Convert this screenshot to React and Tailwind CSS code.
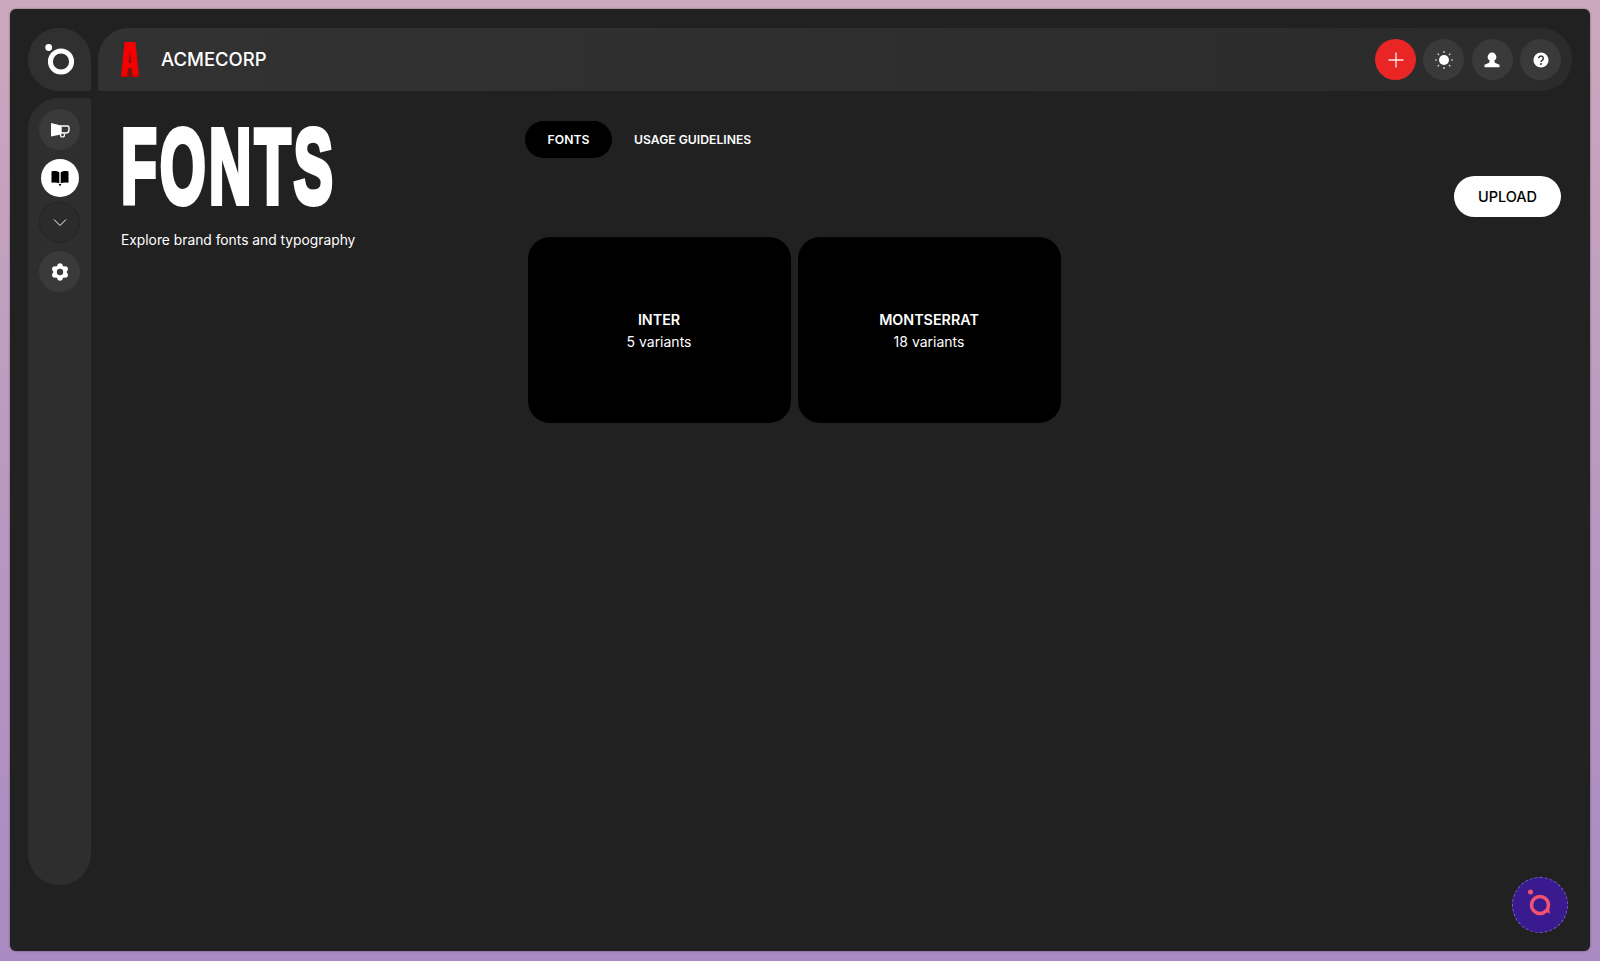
import React from "react";

const font = "font-['Inter','Noto_Sans','Liberation_Sans',sans-serif]";

function Round({ className = "", children }) {
  return <div className={`flex items-center justify-center rounded-full ${className}`}>{children}</div>;
}

function Logo() {
  return (
    <svg width="40" height="40" viewBox="0 0 40 40" fill="none">
      <circle cx="8.7" cy="7.5" r="3.4" fill="#fff" />
      <circle cx="21" cy="21.5" r="10.6" stroke="#fff" strokeWidth="5" />
    </svg>
  );
}

function BrandA() {
  return (
    <svg width="18" height="35" viewBox="0 0 18 35">
      <path d="M3.500 0h11L18 35H0z" fill="#f50000" />
      <path d="M9 9L7.500 21h3z" fill="#7d1414" />
      <path d="M7 26h4l.8 9H6.200z" fill="#7d1414" />
      <path d="M0.200 33h6.200l-.2 2H0zM11.600 33h6.200l.2 2h-6.200z" fill="#d40000" />
    </svg>
  );
}

function Mega() {
  return (
    <svg width="20" height="18" viewBox="0 0 20 18" fill="none">
      <path d="M1 2l10 2.500v9L1 15.500z" fill="#fff" />
      <path d="M11 5h6.500a1.500 1.500 0 0 1 1.500 1.500v2.500a3 3 0 0 1-3 3h-5z" stroke="#fff" strokeWidth="1.400" />
      <circle cx="12.500" cy="14" r="2" stroke="#fff" strokeWidth="1.200" fill="#3a3a3a" />
    </svg>
  );
}

function Book() {
  return (
    <svg width="18" height="17" viewBox="0 0 18 17" fill="#000">
      <path d="M0.500 1.500C3 .8 6 .9 8.300 2.300V13.300C6 12.300 3 12.200 .5 12.800z" />
      <path d="M17.500 1.500C15 .8 12 .9 9.700 2.300V13.300C12 12.300 15 12.200 17.500 12.800z" />
      <path d="M7.600 14h2.800L9 16.200z" />
    </svg>
  );
}

function Chevron() {
  return (
    <svg width="14" height="9" viewBox="0 0 14 9" fill="none">
      <path d="M1 1.500l6 6 6-6" stroke="#fff" strokeWidth="1" />
    </svg>
  );
}

function Gear() {
  return (
    <svg width="18" height="18" viewBox="0 0 18 18" fill="#fff">
      <circle cx="9" cy="9" r="6.800" />
      <circle cx="9" cy="3" r="2.700" />
      <circle cx="9" cy="15" r="2.700" />
      <circle cx="3.800" cy="6" r="2.700" />
      <circle cx="14.200" cy="6" r="2.700" />
      <circle cx="3.800" cy="12" r="2.700" />
      <circle cx="14.200" cy="12" r="2.700" />
      <circle cx="9" cy="9" r="3.200" fill="#3a3a3a" />
    </svg>
  );
}

function Plus() {
  return (
    <svg width="16" height="16" viewBox="0 0 16 16">
      <path d="M8 .5v15M.5 8h15" stroke="#fff" strokeWidth="1.300" opacity="0.9" />
    </svg>
  );
}

function Sun() {
  return (
    <svg width="18" height="18" viewBox="0 0 18 18" fill="none">
      <circle cx="9" cy="9" r="5" fill="#fff" />
      <path
        d="M9 0v2M9 16v2M0 9h2M16 9h2M2.700 2.700l1.300 1.300M14 14l1.300 1.300M2.700 15.300L4 14M14 4l1.300-1.300"
        stroke="#fff"
        strokeWidth="1.200"
        opacity="0.85"
      />
    </svg>
  );
}

function Person() {
  return (
    <svg width="16" height="16" viewBox="0 0 16 16" fill="#fff">
      <circle cx="8" cy="5" r="4.400" />
      <path d="M5.600 8.500h4.800l.4 2.300 4.700 2v2.500H.5v-2.500l4.700-2z" />
    </svg>
  );
}

function Help() {
  return (
    <svg width="16" height="16" viewBox="0 0 16 16" fill="none">
      <circle cx="8" cy="8" r="7.600" fill="#fff" />
      <path d="M5.700 6.300a2.300 2.300 0 1 1 3.500 2C8.400 8.800 8 9.200 8 10" stroke="#333" strokeWidth="1.500" />
      <circle cx="8" cy="12" r="1" fill="#333" />
    </svg>
  );
}

function Bubble() {
  return (
    <svg width="40" height="40" viewBox="0 0 40 40" fill="none">
      <circle cx="10.500" cy="7" r="2.500" fill="#f4526f" />
      <circle cx="20" cy="20" r="8.500" stroke="#f4526f" strokeWidth="3.500" />
      <path d="M25 25.500l5 3.500-1-6z" fill="#f4526f" />
    </svg>
  );
}

function FontCard({ name, count }) {
  return (
    <div className="flex h-[186px] w-[263px] flex-col items-center justify-center rounded-[22px] bg-black pt-[1px] text-white">
      <div className="text-[14.300px] leading-[20px] font-semibold">{name}</div>
      <div className="mt-[2px] text-[14px] leading-[20px]">{count}</div>
    </div>
  );
}

export default function App() {
  return (
    <div className={`h-[961px] w-full overflow-hidden bg-linear-to-b from-[#cba8bd] to-[#a98ac2] pt-[9px] pr-[10px] pb-[10px] pl-[10px] ${font}`}>
      <div className="relative flex h-full gap-[7px] rounded-[6px] bg-[#212121] pt-[19px] pr-[18px] pl-[18px] shadow-[0_0_2px_rgba(0,0,0,0.5)]">
        <div className="flex w-[63px] flex-col gap-[7px]">
          <div className="flex h-[63px] items-center justify-center rounded-t-[31px] rounded-br-[3px] rounded-bl-[31px] bg-[#303030]">
            <Logo />
          </div>
          <div className="flex h-[787px] flex-col items-center rounded-t-[31px] rounded-tr-[3px] rounded-b-[31px] bg-[#2e2e2e] pt-[11px]">
            <Round className="h-[41px] w-[41px] bg-[#3a3a3a]"><Mega /></Round>
            <Round className="mt-[9px] h-[38px] w-[38px] bg-white"><Book /></Round>
            <Round className="mt-[5px] h-[41px] w-[41px] border border-[#242424] bg-[#2b2b2b]"><Chevron /></Round>
            <Round className="mt-[8px] h-[41px] w-[41px] bg-[#3a3a3a]"><Gear /></Round>
          </div>
        </div>

        <div className="flex min-w-0 flex-1 flex-col">
          <header className="flex h-[63px] items-center rounded-tl-[31px] rounded-r-[31px] rounded-bl-[3px] bg-linear-to-r from-[#323232] to-[#2b2b2b] pr-[11px] pl-[23px]">
            <BrandA />
            <div className="ml-[22px] pt-[1px] text-[18.500px] font-medium text-white">ACMECORP</div>
            <div className="ml-auto flex gap-[7.330px]">
              <Round className="h-[41px] w-[41px] bg-[#e92525]"><Plus /></Round>
              <Round className="h-[41px] w-[41px] bg-[#3a3a3a]"><Sun /></Round>
              <Round className="h-[41px] w-[41px] bg-[#3a3a3a]"><Person /></Round>
              <Round className="h-[41px] w-[41px] bg-[#3a3a3a]"><Help /></Round>
            </div>
          </header>

          <main className="flex flex-1 pt-[30px] pr-[11px]">
            <div className="w-[427px] shrink-0 pl-[23px]">
              <h1 className="h-[104px] origin-top-left scale-x-[0.553] font-['Liberation_Sans',sans-serif] text-[106px] leading-[90px] font-bold tracking-[6px] text-white [-webkit-text-stroke:6px_white]">
                FONTS
              </h1>
              <p className="mt-[5px] text-[13.800px] leading-[20px] text-white">Explore brand fonts and typography</p>
            </div>
            <div className="flex-1">
              <div className="flex items-center">
                <div className="flex h-[37px] w-[87px] items-center justify-center rounded-full bg-black pt-[1px] text-[12.200px] font-semibold text-white">FONTS</div>
                <div className="ml-[22px] pt-[1px] text-[12.200px] font-semibold text-white">USAGE GUIDELINES</div>
              </div>
              <div className="mt-[18px] flex justify-end">
                <div className="flex h-[41px] w-[107px] items-center justify-center rounded-full bg-white pt-[1px] text-[14.500px] font-medium text-black">UPLOAD</div>
              </div>
              <div className="mt-[20px] ml-[2.500px] flex gap-[7px]">
                <FontCard name="INTER" count="5 variants" />
                <FontCard name="MONTSERRAT" count="18 variants" />
              </div>
            </div>
          </main>
        </div>

        <div className="absolute right-[22px] bottom-[18px] flex h-[56px] w-[56px] items-center justify-center rounded-full border border-dashed border-[#7a62c0] bg-[#3a1a8f]">
          <Bubble />
        </div>
      </div>
    </div>
  );
}
